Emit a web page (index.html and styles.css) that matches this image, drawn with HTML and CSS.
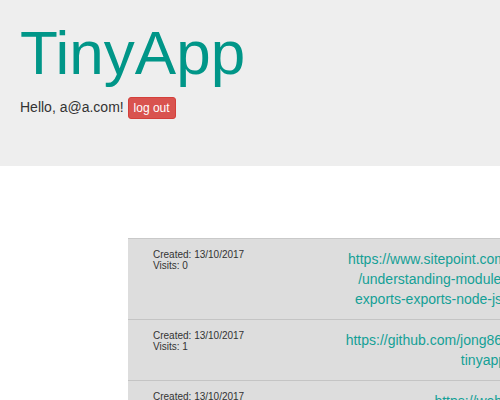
FILE: index.html
```html
<!DOCTYPE html>
<html>
<head>
<meta charset="utf-8">
<title>TinyApp</title>
<link rel="stylesheet" href="styles.css">
</head>
<body>
<header class="jumbotron">
  <h1 class="title">TinyApp</h1>
  <p class="greeting">Hello, a@a.com! <button class="btn-logout">log out</button></p>
</header>
<main class="content">
  <div class="url-table">
    <div class="url-row">
      <div class="meta">Created: 13/10/2017<br>Visits: 0</div>
      <a class="long-url" href="#">https://www.sitepoint.com<br>/understanding-module-<br>exports-exports-node-js/</a>
    </div>
    <div class="url-row">
      <div class="meta">Created: 13/10/2017<br>Visits: 1</div>
      <a class="long-url" href="#">https://github.com/jong86/<br>tinyapp</a>
    </div>
    <div class="url-row">
      <div class="meta">Created: 13/10/2017<br>Visits: 0</div>
      <a class="long-url" href="#">https://web.<br>archive.org/</a>
    </div>
  </div>
</main>
</body>
</html>
```
FILE: styles.css
```css
html, body {
  margin: 0;
  padding: 0;
  overflow: hidden;
  background: #fff;
}
body {
  font-family: "Liberation Sans", Arial, sans-serif;
  font-size: 14px;
  line-height: 20px;
  color: #333;
}
.jumbotron {
  background: #eeeeee;
  padding: 19px 20px 0;
  height: 147px;
}
.title {
  margin: 0 0 10px;
  font-size: 62px;
  line-height: 1.1;
  font-weight: normal;
  color: #009688;
}
.greeting {
  margin: 0;
}
.btn-logout {
  font-family: "Liberation Sans", Arial, sans-serif;
  font-size: 12px;
  line-height: 18px;
  padding: 1px 5px;
  border: 1px solid #d43f3a;
  border-radius: 3px;
  background: #d9534f;
  color: #fff;
  vertical-align: baseline;
}
.content {
  padding: 72px 0 0 128px;
}
.url-table {
  width: 390px;
  background: #dddddd;
  border-top: 1px solid #c9c9c9;
}
.url-row {
  display: flex;
  justify-content: space-between;
  padding: 10px 12px 10px 25px;
  border-bottom: 1px solid #c4c4c4;
}
.meta {
  font-size: 10px;
  line-height: 11px;
  color: #333;
}
.long-url {
  display: block;
  text-align: right;
  color: #14a096;
  text-decoration: none;
}
```
